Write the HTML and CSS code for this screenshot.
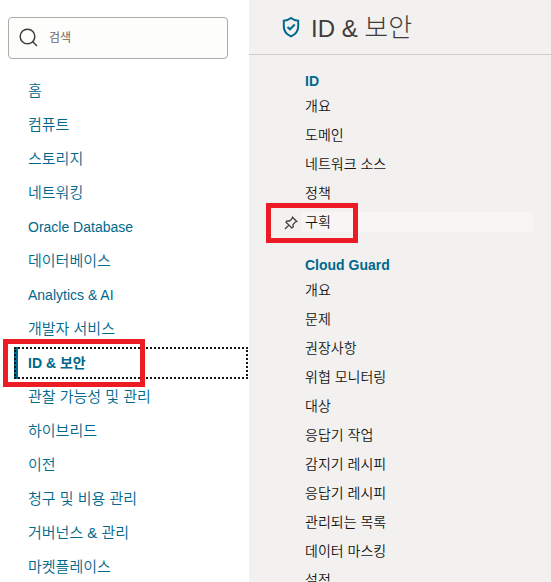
FILE: index.html
```html
<!DOCTYPE html>
<html lang="ko">
<head>
    <meta charset="utf-8">
    <title>ID &amp; 보안</title>
    <link rel="stylesheet" href="styles.css">
</head>
<body>
    <div class="console">
        <!-- 왼쪽 메뉴 -->
        <aside class="sidebar">
            <form class="search">
                <svg class="search-icon" viewBox="0 0 20 20" width="20" height="20" aria-hidden="true">
                    <circle cx="8.5" cy="8.5" r="7.3"/>
                    <path d="M13.5 13.5L18 18"/>
                </svg>
                <input type="search" class="search-input" placeholder="검색" aria-label="검색">
            </form>
            <nav>
                <ul class="menu">
                    <li><a href="#">홈</a></li>
                    <li><a href="#">컴퓨트</a></li>
                    <li><a href="#">스토리지</a></li>
                    <li><a href="#">네트워킹</a></li>
                    <li><a href="#" class="latin">Oracle Database</a></li>
                    <li><a href="#">데이터베이스</a></li>
                    <li><a href="#" class="latin">Analytics &amp; AI</a></li>
                    <li><a href="#">개발자 서비스</a></li>
                    <li><a href="#" class="current">ID &amp; 보안</a><span class="mark mark-menu"></span></li>
                    <li><a href="#">관찰 가능성 및 관리</a></li>
                    <li><a href="#">하이브리드</a></li>
                    <li><a href="#">이전</a></li>
                    <li><a href="#">청구 및 비용 관리</a></li>
                    <li><a href="#">거버넌스 &amp; 관리</a></li>
                    <li><a href="#">마켓플레이스</a></li>
                </ul>
            </nav>
        </aside>

        <!-- 선택한 메뉴의 서비스 목록 -->
        <main class="panel">
            <header class="panel-header">
                <svg class="shield" viewBox="0 0 18 22" width="18" height="22" aria-hidden="true">
                    <path d="M9 2C7 3.6 4.5 4.5 1.8 4.7V10.5C1.8 15.2 4.8 18.5 9 20.4C13.2 18.5 16.2 15.2 16.2 10.5V4.7C13.5 4.5 11 3.6 9 2Z"/>
                    <path d="M5.5 11L8 13.3L12.8 8.5"/>
                </svg>
                <h1>ID &amp; <span class="title-ko">보안</span></h1>
            </header>

            <section class="group">
                <h2>ID</h2>
                <ul class="services">
                    <li><a href="#">개요</a></li>
                    <li><a href="#">도메인</a></li>
                    <li><a href="#">네트워크 소스</a></li>
                    <li><a href="#">정책</a></li>
                    <li>
                        <button type="button" class="pin" aria-label="고정">
                            <svg viewBox="0 0 14 14" width="14" height="14">
                                <path d="M8.5 1.2L12.8 5.5L11.3 6L9 8.6L9.2 11L7.8 12L2 6.2L3 4.9L5.6 5L8 2.7ZM4.9 9.1L1 13"/>
                            </svg>
                        </button>
                        <a href="#" class="hovered">구획</a>
                        <span class="mark mark-service"></span>
                    </li>
                </ul>
            </section>

            <section class="group">
                <h2>Cloud Guard</h2>
                <ul class="services">
                    <li><a href="#">개요</a></li>
                    <li><a href="#">문제</a></li>
                    <li><a href="#">권장사항</a></li>
                    <li><a href="#">위협 모니터링</a></li>
                    <li><a href="#">대상</a></li>
                    <li><a href="#">응답기 작업</a></li>
                    <li><a href="#">감지기 레시피</a></li>
                    <li><a href="#">응답기 레시피</a></li>
                    <li><a href="#">관리되는 목록</a></li>
                    <li><a href="#">데이터 마스킹</a></li>
                    <li><a href="#">설정</a></li>
                </ul>
            </section>
        </main>
    </div>
</body>
</html>
```

FILE: styles.css
```css
* {
    box-sizing: border-box;
}

body {
    margin: 0;
    font-family: "Liberation Sans", "Noto Sans CJK KR", sans-serif;
    font-size: 14px;
    color: #161513;
    background-color: #fff;
}

h1, h2, ul {
    margin: 0;
    padding: 0;
    list-style: none;
}

a {
    text-decoration: none;
}

.console {
    display: flex;
    height: 100vh;
    overflow: hidden;
}

/* 왼쪽 메뉴 */
.sidebar {
    flex: 0 0 249px;
    padding-top: 17px;
}

.search {
    display: flex;
    align-items: center;
    gap: 10px;
    height: 42px;
    margin: 0 21px 16px 8px;
    padding: 0 10px;
    border: 1px solid #aeaca6;
    border-radius: 4px;
    background-color: #fdfdfb;
}

.search-icon {
    flex: none;
    fill: none;
    stroke: #403c38;
    stroke-width: 1.5;
}

.search-input {
    flex: 1;
    min-width: 0;
    padding: 0;
    border: none;
    outline: none;
    background: none;
    font-family: inherit;
    font-size: 12px;
}

.search-input::placeholder {
    color: #6b6762;
}

.menu {
    display: flex;
    flex-direction: column;
    gap: 2px;
    padding: 0 1px 0 14px;
}

.menu li {
    position: relative;
}

.menu a {
    display: block;
    height: 32px;
    padding-left: 14px;
    font-size: 15px;
    font-weight: 350;
    line-height: 32px;
    color: #00688c;
}

.menu .latin {
    font-size: 14px;
    font-weight: 400;
}

.menu .current {
    padding-left: 12px;
    border: 2px dotted #161513;
    background: linear-gradient(#00688c, #00688c) border-box left / 4px 100% no-repeat;
    font-size: 14px;
    font-weight: bold;
    line-height: 28px;
}

/* 오른쪽 패널 */
.panel {
    flex: 1;
    min-width: 0;
    background-color: #f3f1f0;
}

.panel-header {
    display: flex;
    align-items: center;
    gap: 11px;
    height: 55px;
    padding-left: 33px;
    border-bottom: 1px solid #cfcccb;
}

.panel-header h1 {
    font-size: 24px;
    font-weight: 400;
    line-height: 32px;
    color: #403c38;
}

.title-ko {
    font-family: "Noto Sans CJK KR", sans-serif;
    font-size: 26px;
    font-weight: 300;
}

.shield {
    fill: none;
    stroke: #00688c;
    stroke-width: 2;
}

.group {
    padding: 16px 18px 7px 52px;
}

.group h2 {
    margin-bottom: 5px;
    padding-left: 4px;
    font-size: 14px;
    line-height: 20px;
    color: #00688c;
}

.services {
    display: flex;
    flex-direction: column;
    gap: 9px;
}

.services li {
    position: relative;
}

.services a {
    display: block;
    height: 20px;
    padding-left: 4px;
    border-radius: 4px;
    font-weight: 350;
    line-height: 20px;
    color: #161513;
}

.services .hovered {
    background-color: #f7f6f4;
}

.pin {
    position: absolute;
    top: 4px;
    left: -17px;
    width: 14px;
    height: 14px;
    padding: 0;
    border: none;
    background: none;
    cursor: pointer;
}

.pin svg {
    display: block;
    fill: none;
    stroke: #403c38;
    stroke-width: 1.3;
}

/* 강조 표시 */
.mark {
    position: absolute;
    z-index: 1;
    border: 5px solid #ed1c24;
    pointer-events: none;
}

.mark-menu {
    top: -8px;
    left: -11px;
    width: 142px;
    height: 48px;
}

.mark-service {
    top: -9px;
    left: -35px;
    width: 92px;
    height: 40px;
}
```
